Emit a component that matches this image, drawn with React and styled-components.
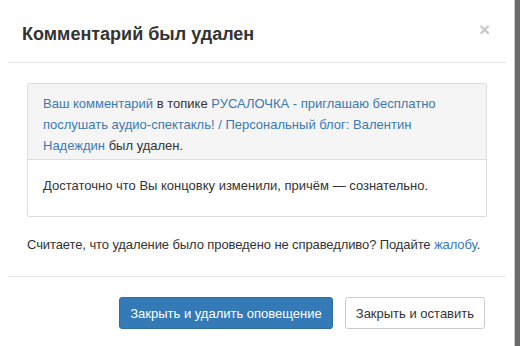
import React from "react";
import styled, { createGlobalStyle } from "styled-components";

const GlobalStyle = createGlobalStyle`
  html, body {
    margin: 0;
    padding: 0;
  }
  body {
    font-family: "Liberation Sans", Arial, sans-serif;
    font-size: 13px;
    color: #333;
  }
  * {
    box-sizing: border-box;
  }
`;

const Backdrop = styled.div`
  display: flex;
  width: 520px;
  height: 346px;
  background: #6b6b6b;
  overflow: hidden;
`;

const Modal = styled.div`
  width: 515px;
  background: #fff;
  border-right: 1px solid #c9c9c9;
  display: flex;
  flex-direction: column;
`;

const Header = styled.div`
  margin: 0 8px;
  height: 63px;
  padding: 0 16px 0 14px;
  display: flex;
  align-items: center;
  justify-content: space-between;
  border-bottom: 1px solid #e5e5e5;
`;

const Title = styled.h4`
  margin: 0;
  font-size: 18px;
  font-weight: bold;
  color: #333;
  padding-top: 7px;
`;

const Close = styled.span`
  font-size: 19px;
  font-weight: bold;
  color: #c8c8c8;
  line-height: 1;
  margin-top: -4px;
`;

const Body = styled.div`
  padding: 20px 27px 0 27px;
  height: 213px;
`;

const Panel = styled.div`
  border: 1px solid #dddddd;
  border-radius: 2px;
`;

const PanelHead = styled.div`
  background: #f5f5f5;
  padding: 9px 15px 3px;
  line-height: 21px;
  border-bottom: 1px solid #dddddd;
`;

const PanelBody = styled.div`
  padding: 15px 15px 20px;
  line-height: 21px;
`;

const Link = styled.a`
  color: #3a7ab5;
  text-decoration: none;
`;

const Note = styled.p`
  margin: 17px 0 0;
  line-height: 21px;
  white-space: nowrap;
  letter-spacing: -0.1px;
`;

const Footer = styled.div`
  margin: 0 8px;
  border-top: 1px solid #e5e5e5;
  padding: 20px 21px 0;
  display: flex;
  justify-content: flex-end;
  gap: 12px;
`;

const Button = styled.button`
  font-family: "Liberation Sans", Arial, sans-serif;
  font-size: 13px;
  height: 32px;
  padding: 0 10px;
  border-radius: 3px;
  border: 1px solid ${(p) => (p.$primary ? "#2e6da4" : "#cccccc")};
  background: ${(p) => (p.$primary ? "#337ab7" : "#fff")};
  color: ${(p) => (p.$primary ? "#fff" : "#333")};
  cursor: pointer;
`;

export default function App() {
  return (
    <>
      <GlobalStyle />
      <Backdrop>
        <Modal>
          <Header>
            <Title>Комментарий был удален</Title>
            <Close>×</Close>
          </Header>
          <Body>
            <Panel>
              <PanelHead>
                <Link href="#">Ваш комментарий</Link> в топике{" "}
                <Link href="#">
                  РУСАЛОЧКА - приглашаю бесплатно послушать аудио-спектакль! /
                  Персональный блог: Валентин Надеждин
                </Link>{" "}
                был удален.
              </PanelHead>
              <PanelBody>
                Достаточно что Вы концовку изменили, причём — сознательно.
              </PanelBody>
            </Panel>
            <Note>
              Считаете, что удаление было проведено не справедливо? Подайте{" "}
              <Link href="#">жалобу</Link>.
            </Note>
          </Body>
          <Footer>
            <Button $primary>Закрыть и удалить оповещение</Button>
            <Button>Закрыть и оставить</Button>
          </Footer>
        </Modal>
      </Backdrop>
    </>
  );
}
